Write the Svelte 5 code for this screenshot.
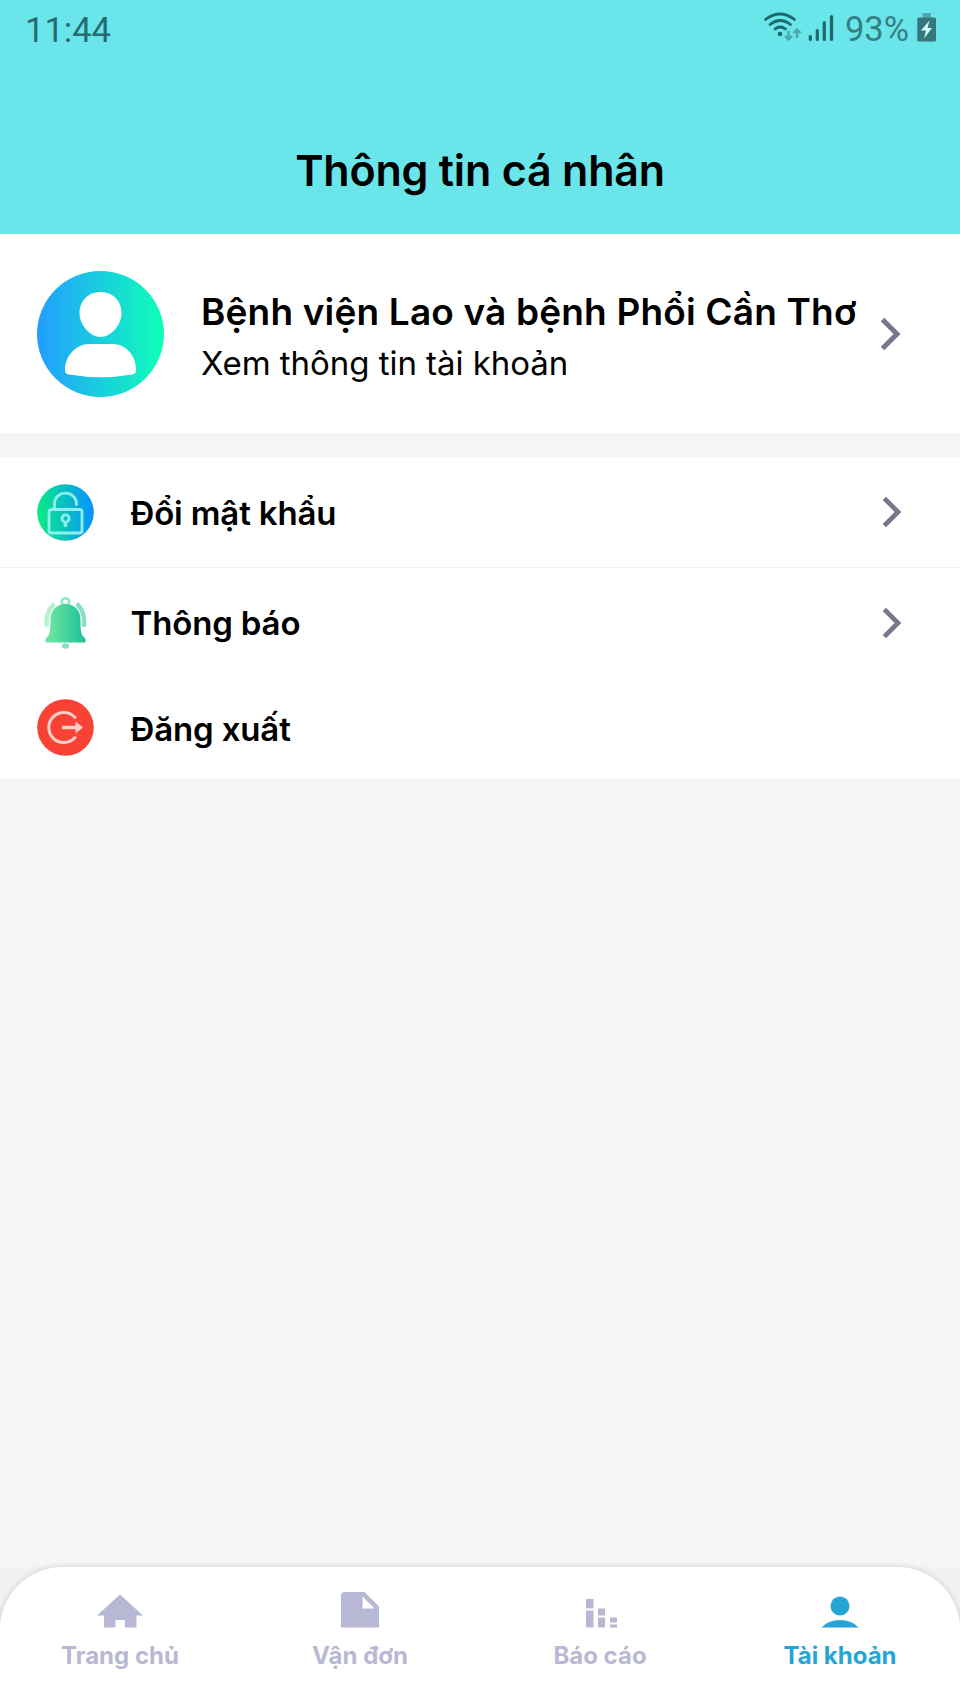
<script>
  let active = $state('account');

  const menu = [
    { id: 'password', label: 'Đổi mật khẩu', arrow: true },
    { id: 'notice', label: 'Thông báo', arrow: true },
    { id: 'logout', label: 'Đăng xuất', arrow: false },
  ];

  const tabs = [
    { id: 'home', label: 'Trang chủ' },
    { id: 'orders', label: 'Vận đơn' },
    { id: 'report', label: 'Báo cáo' },
    { id: 'account', label: 'Tài khoản' },
  ];
</script>

{#snippet chevron(height)}
  <svg class="chevron" width={(height * 22) / 34} {height} viewBox="0 0 22 34">
    <path d="M2.5 2.5 L17 17 L2.5 31.5" fill="none" stroke="#77768c" stroke-width="5" />
  </svg>
{/snippet}

<div class="screen">
  <header>
    <div class="status">
      <span class="time">11:44</span>
      <div class="status-right">
        <svg width="76" height="34" viewBox="762 10 76 34">
          <g fill="none" stroke="#1c686c" stroke-width="2.7" stroke-linecap="round">
            <path d="M765.5 18.5 Q780 7.5 794.5 18.5" />
            <path d="M770 23.5 Q780 15.5 790.5 23.5" />
            <path d="M775 28 Q780 24 785.5 28" />
          </g>
          <circle cx="780" cy="33" r="2.3" fill="#1c686c" />
          <g fill="none" stroke="#48a9ae" stroke-width="2.4">
            <path d="M788.5 30 V38 M785 35 L788.5 38.5 L792 35" />
            <path d="M797 37 V29 M793.5 32 L797 28.5 L800.5 32" />
          </g>
          <g stroke="#1c686c" stroke-width="3.2" stroke-linecap="round">
            <path d="M810.3 35.5 V38.5 M817.3 29.5 V38.5 M824.3 21.5 V38.5 M831.5 15.5 V38.5" />
          </g>
        </svg>
        <span class="percent">93%</span>
        <svg width="20" height="30" viewBox="917 13 20 30">
          <rect x="922.5" y="13" width="8.5" height="5" fill="#4fa9ae" />
          <rect x="917.3" y="17.5" width="18.7" height="24" rx="1.5" fill="#35787c" />
          <path d="M929.5 20.5 L921 30.5 H926 L924 38.5 L932 28 H927.5 Z" fill="#d5fbfc" />
        </svg>
      </div>
    </div>
    <h1>Thông tin cá nhân</h1>
  </header>

  <section class="profile">
    <svg class="avatar" width="128" height="126" viewBox="0 0 128 126">
      <defs>
        <linearGradient id="avatar-fill">
          <stop offset="0" stop-color="#219eff" />
          <stop offset="1" stop-color="#10ffb9" />
        </linearGradient>
      </defs>
      <ellipse cx="63.5" cy="63" rx="63.5" ry="63" fill="url(#avatar-fill)" />
      <path
        d="M63.5 21 C76 21 84.5 30 84.5 42 C84.5 54 74 66 63.5 66 C53 66 42.5 54 42.5 42 C42.5 30 51 21 63.5 21 Z"
        fill="#fff"
      />
      <path
        d="M52 73 H76 C88 73 99 84 99 98 V100 Q99 103 95 103.5 Q64 109 32 103.5 Q28 103 28 99 C28 84 40 73 52 73 Z"
        fill="#fff"
      />
    </svg>
    <div class="who">
      <div class="name">Bệnh viện Lao và bệnh Phổi Cần Thơ</div>
      <div class="sub">Xem thông tin tài khoản</div>
    </div>
    {@render chevron(34)}
  </section>

  <section class="menu">
    {#each menu as item}
      <div class="row {item.id}">
        <svg class="icon" width="57" height="57" viewBox="0 0 57 57">
          {#if item.id === 'password'}
            <defs>
              <linearGradient id="lock-fill" x1="0" y1=".55" x2="1" y2=".45">
                <stop offset="0" stop-color="#08ec83" />
                <stop offset="1" stop-color="#0892ff" />
              </linearGradient>
            </defs>
            <circle cx="28.5" cy="28.5" r="28.3" fill="url(#lock-fill)" />
            <g fill="none" stroke="#8feff0" stroke-width="2.8" stroke-linejoin="round">
              <rect x="12" y="25.5" width="33" height="23.5" rx="2.5" />
              <path d="M17.5 25 V20 C17.5 5.5 39.5 5.5 39.5 20.5" stroke-linecap="round" />
              <circle cx="28.5" cy="34.5" r="3.6" />
              <path d="M28.5 37.5 V43" stroke-width="3.5" />
            </g>
          {:else if item.id === 'notice'}
            <defs>
              <linearGradient id="bell-fill">
                <stop offset="0" stop-color="#71eaa0" />
                <stop offset="1" stop-color="#1ebf9c" />
              </linearGradient>
            </defs>
            <g fill="none" stroke-linecap="round">
              <path d="M16 10 Q9 17 9.5 30" stroke="#b5f3cf" stroke-width="4.5" />
              <path d="M41 10 Q48 17 47 30" stroke="#88dfc8" stroke-width="4.5" />
              <circle cx="28.5" cy="7" r="3.7" stroke="#8ce8c1" stroke-width="2.6" />
            </g>
            <path
              d="M28.5 9 C38 9 43.5 16 43.5 24 C43.5 35 44 40 47 42 Q50 45 48 47.5 H9 Q7 45 10 42 C13 40 13.5 35 13.5 24 C13.5 16 19 9 28.5 9 Z"
              fill="url(#bell-fill)"
            />
            <ellipse cx="28.5" cy="51" rx="3.5" ry="2.8" fill="#7fe4c0" />
          {:else}
            <circle cx="28.5" cy="28.5" r="28.3" fill="#f84235" />
            <g fill="none" stroke="#ffd0c9" stroke-width="3">
              <path d="M38 18.5 A15 15 0 1 0 38 38.5" stroke-linecap="round" />
              <path d="M25 28.5 H40" stroke-width="3.5" />
            </g>
            <path d="M38.5 22.5 L46 28.5 L38.5 34.5 Z" fill="#ffd0c9" />
          {/if}
        </svg>
        <span class="label">{item.label}</span>
        {#if item.arrow}
          {@render chevron(32)}
        {/if}
      </div>
    {/each}
  </section>

  <div class="dock">
    <nav>
      {#each tabs as tab}
        <button class="tab {tab.id}" class:active={active === tab.id} onclick={() => (active = tab.id)}>
          <svg width="48" height="40" viewBox="0 0 48 40" fill="currentColor">
            {#if tab.id === 'home'}
              <path d="M24 5.5 L47 26.5 H40.5 V38.5 H29 V31 H19.5 V38.5 H8 V26.5 H1 Z" />
            {:else if tab.id === 'orders'}
              <path
                fill-rule="evenodd"
                d="M9 3 H28.5 L43 17.5 V38.5 H5 V7 Q5 3 9 3 Z M26.5 7.5 V19.5 H38.5 Z"
              />
            {:else if tab.id === 'report'}
              <path
                d="M10 10 h7.5 v9.5 h-7.5 z M10 21.5 h7.5 v17 h-7.5 z M22 19.5 h7 v7 h-7 z M22 28.5 h7 v10 h-7 z M34 28.5 h7 v5 h-7 z M34 35.5 h7 v3 h-7 z"
              />
            {:else}
              <circle cx="24" cy="17" r="9.5" />
              <path d="M5.5 38.5 Q12 31 24 31 Q36 31 42.5 38.5 Z" />
            {/if}
          </svg>
          <span>{tab.label}</span>
        </button>
      {/each}
    </nav>
  </div>
</div>

<style>
  :global(body) {
    background: #f5f5f5;
  }

  .screen {
    display: flex;
    flex-direction: column;
    width: 960px;
    height: 1706px;
    overflow: hidden;
    background: #f5f5f5;
    color: #000;
    font-family: Inter, 'Noto Sans', sans-serif;
  }

  header {
    height: 234px;
    background: #6ae5e9;
  }

  .status {
    display: flex;
    justify-content: space-between;
    height: 58px;
    padding: 0 23px 0 25px;
    font-family: Roboto, sans-serif;
    font-size: 34.5px;
    line-height: 60px;
    color: #256b6f;
  }

  .status-right {
    display: flex;
    align-items: center;
  }

  .status-right svg {
    margin-bottom: 2px;
  }

  .percent {
    margin: 0 8px 0 7px;
    color: #357f83;
  }

  h1 {
    margin: 85px 0 0;
    font-size: 43px;
    font-weight: 600;
    letter-spacing: -0.2px;
    line-height: 54px;
    text-align: center;
  }

  .profile {
    display: flex;
    align-items: center;
    box-sizing: border-box;
    height: 199px;
    padding: 0 58px 0 37px;
    margin-bottom: 24px;
    background: #fff;
  }

  .who {
    flex: 1;
    padding: 7px 0 0 36px;
    white-space: nowrap;
  }

  .name {
    font-size: 37px;
    font-weight: 600;
    letter-spacing: 0.17px;
    line-height: 52px;
  }

  .sub {
    font-size: 33px;
    letter-spacing: -0.04px;
    line-height: 51px;
  }

  .menu {
    background: #fff;
  }

  .row {
    display: flex;
    align-items: center;
    box-sizing: border-box;
    height: 111px;
    padding: 0 57px 0 37px;
  }

  .row.password {
    border-bottom: 1px solid #f3f3f3;
  }

  .row.notice {
    height: 110px;
  }

  .row.logout {
    height: 101px;
    padding-bottom: 2px;
  }

  .label {
    flex: 1;
    padding-left: 36.5px;
    font-size: 33px;
    font-weight: 600;
    letter-spacing: -0.15px;
    line-height: 44px;
  }

  .password .label,
  .logout .label {
    padding-top: 2px;
  }

  .dock {
    margin-top: auto;
    background: #f1f1f1;
  }

  nav {
    display: grid;
    grid-template-columns: repeat(4, 1fr);
    height: 139px;
    border-radius: 62px 62px 0 0;
    background: #fff;
    box-shadow: 0 0 6px rgba(0, 0, 0, 0.16);
  }

  .tab {
    display: flex;
    flex-direction: column;
    align-items: center;
    padding: 22px 0 0;
    border: 0;
    background: none;
    color: #b9b8d4;
    font-family: inherit;
    font-size: 24px;
    font-weight: 700;
    line-height: 32px;
    cursor: pointer;
  }

  .tab span {
    margin-top: 11px;
  }

  .tab.active {
    color: #25a5d5;
  }
</style>
